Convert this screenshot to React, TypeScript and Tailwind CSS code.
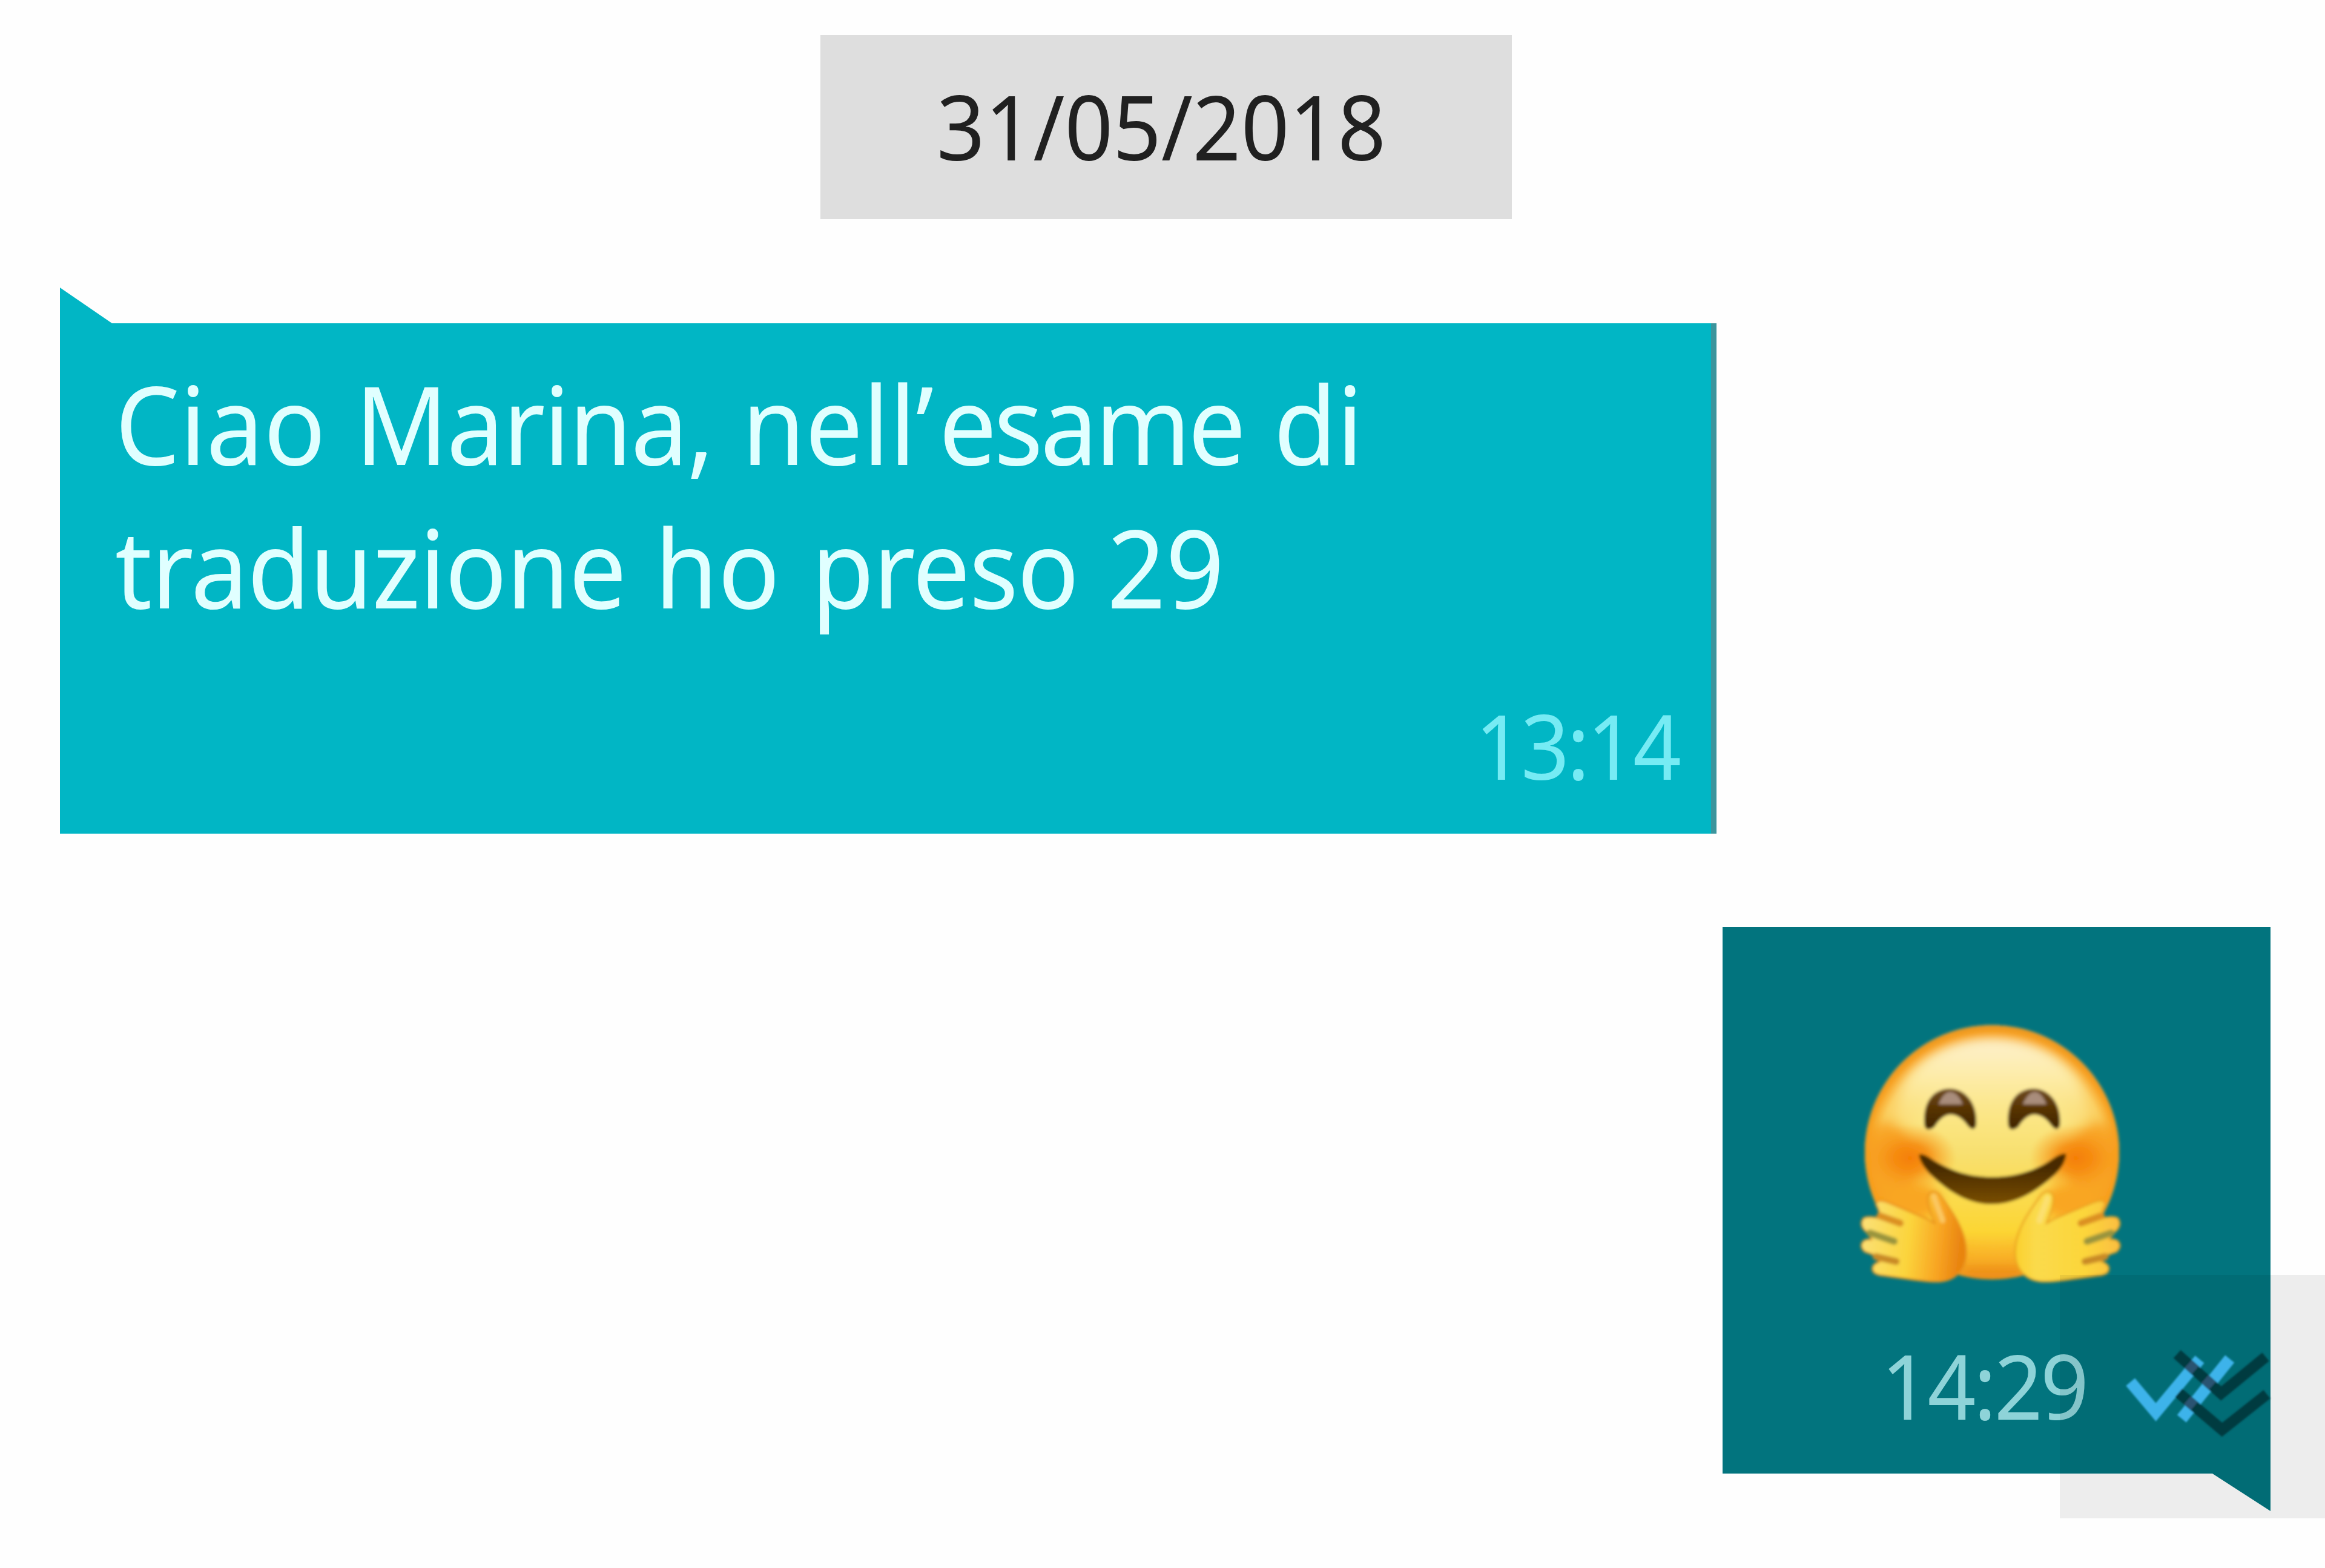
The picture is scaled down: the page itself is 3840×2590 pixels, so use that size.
const HAND =
  "M205 1015 Q212 985 262 1005 L455 1085 L495 1108 C478 1060 455 1010 465 968 Q488 935 522 968 C590 1060 652 1150 652 1250 C652 1345 590 1400 500 1398 C420 1396 330 1378 225 1366 Q178 1355 190 1322 Q200 1305 222 1300 Q212 1280 185 1262 L150 1250 Q122 1225 140 1200 Q155 1185 182 1190 Q175 1162 150 1145 Q122 1115 142 1085 Q165 1070 225 1085 Q225 1050 205 1015 Z";

const EYE =
  "M445 622 C435 495 500 442 570 442 C648 442 710 515 702 622 Q692 658 662 628 Q622 570 575 570 Q533 570 494 632 Q452 660 445 622 Z";

/** Fingers are separated by short creases along the outer side of the palm. */
function Creases() {
  return (
    <g fill="none" strokeLinecap="round" strokeWidth="34">
      <path d="M225 1072 L325 1108" stroke="#dc9024" />
      <path d="M175 1157 L295 1198" stroke="#9a943c" />
      <path d="M205 1274 L305 1298" stroke="#c98a28" />
    </g>
  );
}

function HuggingFace() {
  return (
    <svg viewBox="0 0 1560 1500" className="h-[500px] w-[520px]" role="img" aria-label="hug">
      <defs>
        <linearGradient id="face" x1="0" y1="0" x2="0" y2="1">
          <stop offset="0.04" stopColor="#fdf0c8" />
          <stop offset="0.3" stopColor="#fce88c" />
          <stop offset="0.5" stopColor="#f8e070" />
          <stop offset="0.8" stopColor="#fcd634" />
          <stop offset="0.9" stopColor="#f9b62a" />
          <stop offset="1" stopColor="#ea8512" />
        </linearGradient>
        <radialGradient id="rim" gradientUnits="userSpaceOnUse" cx="780" cy="790" r="660">
          <stop offset="0.6" stopColor="#f8981a" stopOpacity="0" />
          <stop offset="0.86" stopColor="#f9a51e" stopOpacity="0.35" />
          <stop offset="0.95" stopColor="#f79c1a" stopOpacity="0.95" />
          <stop offset="1" stopColor="#e8961f" />
        </radialGradient>
        <linearGradient id="shine" x1="0" y1="0" x2="0" y2="1">
          <stop offset="0" stopColor="#fdf0cc" />
          <stop offset="0.45" stopColor="#fdeba4" />
          <stop offset="1" stopColor="#fae37c" stopOpacity="0.3" />
        </linearGradient>
        <radialGradient id="cheek">
          <stop offset="0" stopColor="#f47e04" />
          <stop offset="0.4" stopColor="#f68b10" stopOpacity="0.9" />
          <stop offset="1" stopColor="#f9a020" stopOpacity="0" />
        </radialGradient>
        <linearGradient id="mouth" x1="0" y1="0" x2="0" y2="1">
          <stop offset="0.3" stopColor="#4a2c00" />
          <stop offset="1" stopColor="#7a4e00" />
        </linearGradient>
        <linearGradient id="eye" x1="0" y1="0" x2="0" y2="1">
          <stop offset="0" stopColor="#6e4a20" />
          <stop offset="0.5" stopColor="#573300" />
          <stop offset="1" stopColor="#3f2400" />
        </linearGradient>
        <linearGradient id="handLeft" x1="0" y1="0" x2="1" y2="0.1">
          <stop offset="0" stopColor="#fbe27c" />
          <stop offset="0.5" stopColor="#fbd43c" />
          <stop offset="0.8" stopColor="#f8a422" />
          <stop offset="1" stopColor="#e98410" />
        </linearGradient>
        <linearGradient id="handRight" x1="0" y1="0" x2="1" y2="0">
          <stop offset="0" stopColor="#fbbf42" />
          <stop offset="0.35" stopColor="#fcd63a" />
          <stop offset="0.8" stopColor="#fada4c" />
          <stop offset="1" stopColor="#fbd02c" />
        </linearGradient>
        <filter id="soft" x="-10%" y="-10%" width="120%" height="120%">
          <feGaussianBlur stdDeviation="8" />
        </filter>
        <filter id="softer" x="-30%" y="-30%" width="160%" height="160%">
          <feGaussianBlur stdDeviation="26" />
        </filter>
        <clipPath id="head">
          <ellipse cx="780" cy="757" rx="630" ry="630" />
        </clipPath>
      </defs>
      <g filter="url(#soft)">
        <g clipPath="url(#head)">
          <rect x="140" y="120" width="1280" height="1280" fill="url(#face)" />
          <rect x="140" y="120" width="1280" height="1280" fill="url(#rim)" />
          <path
            d="M310 590 C310 340 540 205 780 205 C1020 205 1250 340 1250 590 C1130 660 430 660 310 590 Z"
            fill="url(#shine)"
            filter="url(#softer)"
          />
          <ellipse cx="250" cy="860" rx="150" ry="250" fill="#f89c1c" opacity="0.8" filter="url(#softer)" />
          <ellipse cx="1310" cy="860" rx="150" ry="250" fill="#f89c1c" opacity="0.8" filter="url(#softer)" />
          <ellipse cx="400" cy="1000" rx="130" ry="90" fill="#f9a622" filter="url(#softer)" />
          <ellipse cx="1160" cy="1000" rx="130" ry="90" fill="#f9a622" filter="url(#softer)" />
          <ellipse cx="375" cy="785" rx="230" ry="170" fill="url(#cheek)" />
          <ellipse cx="1195" cy="785" rx="230" ry="170" fill="url(#cheek)" />
          <rect x="640" y="1330" width="290" height="60" fill="#ea8414" opacity="0.5" filter="url(#softer)" />
        </g>
        <path d={EYE} fill="url(#eye)" />
        <path d={EYE} fill="url(#eye)" transform="translate(415 0)" />
        <path d="M515 520 Q540 458 572 458 Q610 458 635 520 Z" fill="#a98d7c" />
        <path d="M932 520 Q960 458 992 458 Q1025 458 1050 520 Z" fill="#a98d7c" />
        <path
          d="M418 768 Q440 760 480 790 C580 855 680 880 780 880 C880 880 990 855 1080 790 Q1125 758 1148 765 Q1145 815 1095 865 C980 970 880 1014 780 1014 C680 1014 580 970 468 860 Q420 805 418 768 Z"
          fill="url(#mouth)"
        />
        <path d={HAND} fill="url(#handLeft)" stroke="#e8901a" strokeWidth="8" />
        <Creases />
        <path d="M492 975 C505 1020 525 1060 535 1095" fill="none" stroke="#fbc860" strokeWidth="26" strokeLinecap="round" />
        <g transform="translate(1546 0) scale(-1 1)">
          <path d={HAND} fill="url(#handRight)" stroke="#e9a020" strokeWidth="8" />
          <Creases />
          <path d="M492 985 C505 1030 520 1060 530 1095" fill="none" stroke="#fce070" strokeWidth="30" strokeLinecap="round" />
        </g>
      </g>
    </svg>
  );
}

function ReadTicks() {
  return (
    <svg viewBox="0 0 1050 750" className="h-[250px] w-[350px]" fill="none">
      <defs>
        <filter id="tickSoft" x="-10%" y="-10%" width="120%" height="120%">
          <feGaussianBlur stdDeviation="5" />
        </filter>
      </defs>
      <g filter="url(#tickSoft)">
        <g stroke="#3db3ea" strokeWidth="58">
          <path d="M206 308 L332 458 L549 196" />
          <path d="M460 490 L698 194" />
        </g>
        <g stroke="#043b40" strokeWidth="54">
          <path d="M437 170 L655 365 L876 184" />
          <path d="M445 362 L660 545 L882 369" />
        </g>
        <g stroke="#2c5271" strokeWidth="52">
          <path d="M492 219 L527 250" />
          <path d="M575 294 L612 327" />
          <path d="M488 399 L522 428" />
        </g>
      </g>
    </svg>
  );
}

export default function App() {
  return (
    <main className="relative flex h-[2590px] w-[3840px] flex-col overflow-hidden bg-[#fefefe] pt-[58px] font-['Noto_Sans',sans-serif]">
      <div className="ml-[1355px] h-[304px] w-[1142px] bg-[#dedede] pl-[192px] text-[149px] leading-[299px] text-[#202020]">
        <span className="inline-block origin-left scale-x-[0.936] whitespace-pre">31/05/2018</span>
      </div>

      <section className="mt-[113px] ml-[99px] flex w-[2736px] flex-col">
        <svg viewBox="0 0 86 59" className="block h-[59px] w-[86px]">
          <path d="M0 0 L86 59 H0 Z" fill="#01b6c5" />
        </svg>
        <div className="flex h-[843px] flex-col border-r-[9px] border-[#3b959d] bg-[#01b6c5] pt-[46px] pl-[91px] text-[180px] leading-[237px] text-[#e0ffff]">
          <span className="w-max origin-left scale-x-[0.94] whitespace-pre">
            Ciao <span className="ml-[5px] tracking-[-2.4px]">Marina,</span> <span className="ml-[4px]">nell’</span>
            <span className="ml-[9px] tracking-[-4.8px]">esame</span> <span className="ml-[7px]">di</span>
          </span>
          <span className="w-max origin-left scale-x-[0.94] whitespace-pre">
            <span className="tracking-[-1.4px]">traduzione</span> <span className="ml-[4px]">ho</span>{" "}
            <span className="ml-[8px] tracking-[-1.8px]">preso</span> <span className="ml-[4px]">29</span>
          </span>
          <time className="mt-[77px] mr-[53px] w-max origin-right scale-x-[0.938] self-end text-[149px] leading-[200px] tracking-[-4.4px] text-[#76ebf4]">
            13:14
          </time>
        </div>
      </section>

      <section className="mt-[154px] ml-[2845px] flex w-[905px] flex-col">
        <div className="h-[903px] bg-[#02747e] pt-[120px] pl-[185px]">
          <HuggingFace />
          <div className="mt-[12px] ml-[77px] flex h-[250px] items-center">
            <time className="w-max origin-left scale-x-[0.938] text-[149px] leading-[250px] tracking-[-3.8px] text-[#8ed3d8]">
              14:29
            </time>
          </div>
        </div>
        <svg viewBox="0 0 96 62" className="block h-[62px] w-[96px] self-end">
          <path d="M0 0 H96 V62 Z" fill="#02747e" />
        </svg>
      </section>

      <div className="absolute top-[2106px] left-[3402px] h-[402px] w-[438px] bg-black/[0.067]" />
      <div className="absolute top-[2180px] left-[3450px]">
        <ReadTicks />
      </div>
    </main>
  );
}
